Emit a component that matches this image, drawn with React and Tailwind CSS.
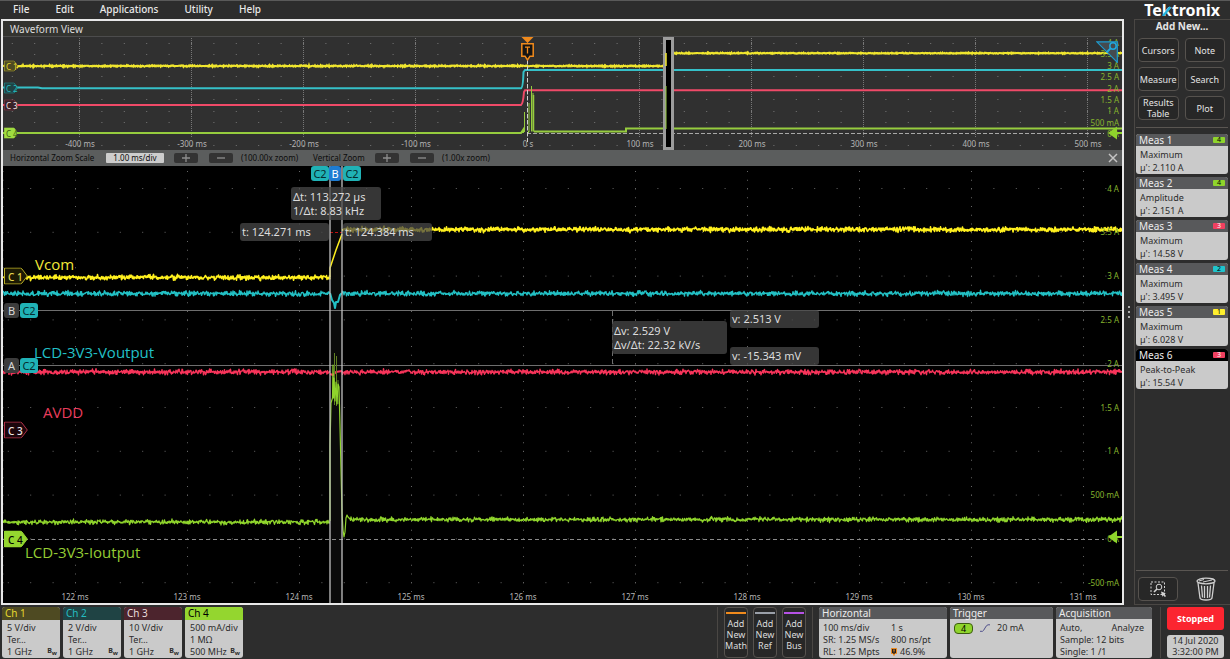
import { useState } from 'react'
import clsx from 'clsx'

const MENU = ['File', 'Edit', 'Applications', 'Utility', 'Help']
const ADD_NEW = ['Cursors', 'Note', 'Measure', 'Search', 'Results Table', 'Plot']

const MEASUREMENTS = [
  { name: 'Meas 1', type: 'Maximum',      value: '2.110 A', ch: 4 },
  { name: 'Meas 2', type: 'Amplitude',    value: '2.151 A', ch: 4 },
  { name: 'Meas 3', type: 'Maximum',      value: '14.58 V', ch: 3 },
  { name: 'Meas 4', type: 'Maximum',      value: '3.495 V', ch: 2 },
  { name: 'Meas 5', type: 'Maximum',      value: '6.028 V', ch: 1 },
  { name: 'Meas 6', type: 'Peak-to-Peak', value: '15.54 V', ch: 3, active: true },
]

const CH_BADGE = {
  1: 'bg-[#fff02e] text-black',
  2: 'bg-[#20c4cc] text-black',
  3: 'bg-[#f04060] text-white',
  4: 'bg-[#8fd42c] text-black',
}

const CHANNELS = [
  { name: 'Ch 1', head: 'bg-[#4e4a22] text-[#e6d92e]', rows: ['5 V/div', 'Ter…', '1 GHz'] },
  { name: 'Ch 2', head: 'bg-[#1f4344] text-[#25bcc0]', rows: ['2 V/div', 'Ter…', '1 GHz'] },
  { name: 'Ch 3', head: 'bg-[#4c242d] text-[#e8dcdc]', rows: ['10 V/div', 'Ter…', '1 GHz'] },
  { name: 'Ch 4', head: 'bg-[#94d62f] text-black',     rows: ['500 mA/div', '1 MΩ', '500 MHz'] },
]

const ADD_WAVES = [
  { name: 'Math', bar: 'bg-[#f08a1c]' },
  { name: 'Ref',  bar: 'bg-[#9a9fa8]' },
  { name: 'Bus',  bar: 'bg-[#b652e6]' },
]

// plot frames, in drawing units: x, y, width, height
const OVERVIEW = { x: 3, y: 37, w: 1119, h: 113 }
const MAIN     = { x: 3, y: 166, w: 1119, h: 437 }

const OVERVIEW_TIMES = ['-400 ms', '-300 ms', '-200 ms', '-100 ms', '0 s', '100 ms', '200 ms', '300 ms', '400 ms', '500 ms']
const MAIN_TIMES     = ['122 ms', '123 ms', '124 ms', '125 ms', '126 ms', '127 ms', '128 ms', '129 ms', '130 ms', '131 ms']
const OVERVIEW_AMPS  = ['4 A', '3.5 A', '3 A', '2.5 A', '2 A', '1.5 A', '1 A', '500 mA', '0 A']
const MAIN_AMPS      = ['4 A', '3.5 A', '3 A', '2.5 A', '2 A', '1.5 A', '1 A', '500 mA', '0 A', '-500 mA']

function makeRandom(seed) {
  let s = seed
  return () => {
    s = (s * 16807) % 2147483647
    return s / 2147483647
  }
}

// noisy horizontal run from x1 to x2 around y
function noise(x1, x2, y, amp, seed) {
  const rnd = makeRandom(seed)
  let d = ''
  for (let x = x1; x <= x2; x += 0.5) {
    const v = (rnd() + rnd() + rnd() - 1.5) * amp
    d += `${x === x1 ? 'M' : 'L'}${x} ${(y + v).toFixed(1)}`
  }
  return d
}

function at(frame, x, y) {
  return {
    left: `${((x - frame.x) / frame.w) * 100}%`,
    top: `${((y - frame.y) / frame.h) * 100}%`,
  }
}

function Grid({ startX, rows, top, bottom, stepY, color }) {
  const cols = Array.from({ length: 10 }, (_, i) => startX + i * 112)
  return (
    <g stroke={color} fill="none">
      {cols.map(x => (
        <path key={x} d={`M${x} ${top}V${bottom}`} strokeDasharray={`1 ${stepY - 1}`} />
      ))}
      {rows.map(y => (
        <path key={y} d={`M${startX - 67.7} ${y}H1122`} strokeDasharray="1 21.4" />
      ))}
    </g>
  )
}

function Plot({ frame, className, drawing, children }) {
  return (
    <div className={clsx('relative overflow-hidden', className)}>
      <svg
        className="absolute inset-0 h-full w-full"
        viewBox={`${frame.x} ${frame.y} ${frame.w} ${frame.h}`}
        preserveAspectRatio="none"
        aria-hidden="true"
      >
        {drawing}
      </svg>
      {children}
    </div>
  )
}

function TimeLabels({ frame, labels, startX, y }) {
  return labels.map((t, i) => (
    <span
      key={t}
      style={at(frame, startX + i * 112, y)}
      className="absolute -translate-x-1/2 -translate-y-1/2 whitespace-nowrap text-[8px] leading-3 text-[#b4b4b4]"
    >
      {t}
    </span>
  ))
}

function AmpLabels({ frame, labels, startY, step }) {
  return labels.map((t, i) => (
    <span
      key={t}
      style={{ top: at(frame, 0, startY + i * step).top }}
      className="absolute right-[3px] -translate-y-1/2 whitespace-nowrap text-[8px] leading-3 text-[#86b42e]"
    >
      {t}
    </span>
  ))
}

function LevelArrow({ frame, y }) {
  return (
    <svg style={{ top: at(frame, 0, y).top }} className="absolute right-0 h-3.5 w-3.5 -translate-y-1/2" viewBox="0 0 14 14" aria-hidden="true">
      <path d="M0 7L9 .5V6h5v2H9v5.500z" fill="#8fd42c" />
    </svg>
  )
}

function Flag({ frame, y, label, fill, stroke, text, small }) {
  return (
    <button
      style={at(frame, 4, y)}
      className={clsx(
        'absolute flex -translate-y-1/2 items-center whitespace-nowrap',
        small ? 'h-[11px] w-[14px] pl-0.5 text-[8px] leading-[11px]' : 'h-[17px] w-6 pl-1 text-[10px] leading-4 font-medium',
        text,
      )}
    >
      <svg className="absolute inset-0 h-full w-full" viewBox="0 0 24 17" preserveAspectRatio="none" aria-hidden="true">
        <path d="M.5 .5H16.500L18 1.500L23.300 8.500L18 15.500L16.500 16.500H.5z" fill={fill} stroke={stroke} />
      </svg>
      <span className="relative">{label}</span>
    </button>
  )
}

function Readout({ x, y, className, lines }) {
  return (
    <div
      style={at(MAIN, x, y)}
      className={clsx('absolute flex flex-col justify-center whitespace-nowrap rounded-[3px] bg-[#484848]/75 pl-0.5 text-[11px] leading-[14px] text-[#dcdcdc]', className)}
    >
      {lines.map(l => <p key={l}>{l}</p>)}
    </div>
  )
}

function CursorTag({ x, y, label, className }) {
  return (
    <button
      style={at(MAIN, x, y)}
      className={clsx('absolute h-[15px] rounded-[3px] text-center text-[11px] leading-[15px]', className)}
    >
      {label}
    </button>
  )
}

function WaveLabel({ x, y, className, children }) {
  return (
    <span style={at(MAIN, x, y)} className={clsx("absolute -translate-y-1/2 whitespace-nowrap font-['Open_Sans','Noto_Sans',sans-serif] text-[15px] leading-5", className)}>
      {children}
    </span>
  )
}

function OverviewDrawing() {
  return (
    <>
      <rect x="3" y="37" width="1119" height="113" fill="#303030" />
      <Grid startX={79.500} rows={[43.500, 54.500, 76.500, 99.500, 111.500, 122.500, 145.500]} top={38} bottom={138} stepY={2} color="#777" />
      <g fill="none" strokeWidth="2">
        <path d="M527 133.500H1104" stroke="#a8a8a8" strokeWidth="1" strokeDasharray="4 2" />
        <path d="M3 87.500H38L42 88.300H521Q523 88 523.500 72L525 70H1122" stroke="#35c0c8" />
        <path d="M3 105H521Q523 104 524 92L525 90.300H1122" stroke="#f04a68" />
        <path d="M3 133H521L523 130V132H524M528 132H529M534 131.500H626V128.500H1122" stroke="#96cc3e" />
        <path d="M524.500 112V132M529 103V132M533 93V131.500M531.500 86V131.500" stroke="#96cc3e" strokeWidth="1" />
        <path d="M533.500 95V131.500" stroke="#96cc3e" strokeWidth="1.500" />
        <path d={noise(3, 666, 66, 0.7, 11)} stroke="#f0e62e" />
        <path d={noise(666, 1122, 53.200, 0.5, 12)} stroke="#f0e62e" />
        <path d="M527.500 60V142" stroke="#d0d0d0" strokeDasharray="4 2" strokeWidth="1" />
      </g>
      <path d="M521.500 37H533.500L527.500 43z" fill="#f08a1c" />
      <path d="M521.800 43.800H533.200V56.200H530L527.500 60L525 56.200H521.800z" fill="#141414" stroke="#f08a1c" strokeWidth="1.500" />
      <path d="M525 47.200H530M527.500 47.200V53.500" stroke="#f08a1c" strokeWidth="1.300" />
      <rect x="664.5" y="38.5" width="8" height="110" fill="none" stroke="#9c9c9c" strokeWidth="3" />
      <rect x="666" y="40" width="5" height="107" fill="#000" />
      <path d="M666 86V129" stroke="#96cc3e" />
      <path d="M666 66V53" stroke="#f0e62e" strokeWidth="1.500" />
    </>
  )
}

function MainDrawing() {
  const rows = Array.from({ length: 10 }, (_, i) => 188.500 + i * 43.800)
  return (
    <>
      <rect x="3" y="166" width="1119" height="437" fill="#000" />
      <Grid startX={75.500} rows={rows} top={171} bottom={598} stepY={8.750} color="#666" />
      <path d="M3 171V598" stroke="#666" strokeDasharray="1 7.75" />
      <rect x="330" y="166" width="12" height="437" fill="#fff" fillOpacity="0.04" />
      <path d="M3 539.500H1104" stroke="#8a8a8a" strokeDasharray="4 3" />
      <path d="M3 310.500H1122M3 365.500H1122" stroke="#6e6e6e" />
      <path d="M612.500 311V365" stroke="#6e6e6e" strokeDasharray="5 3" />
      <g fill="none" strokeLinejoin="round">
        <path d={noise(3, 330, 277.500, 2.300, 21)} stroke="#fff01e" strokeWidth="1.600" />
        <path d="M330 277V268L334 256L336 250L342 234" stroke="#fff01e" strokeWidth="1.500" />
        <path d={noise(342, 1122, 229.500, 2.300, 22)} stroke="#fff01e" strokeWidth="1.600" />
        <path d={noise(3, 330, 293.500, 2.400, 23)} stroke="#22c0c4" strokeWidth="1.400" />
        <path d="M330 293L332 300L334 303L335 308L336 302L338 302L340 295L342 293" stroke="#22c0c4" strokeWidth="2" />
        <path d={noise(342, 1122, 293.500, 2.400, 24)} stroke="#22c0c4" strokeWidth="1.400" />
        <path d={noise(3, 330, 372, 2.400, 25)} stroke="#f8345a" strokeWidth="1.400" />
        <path d="M330 374L333 375L336 372L342 371" stroke="#f8345a" strokeWidth="2" />
        <path d={noise(342, 1122, 372, 2.400, 26)} stroke="#f8345a" strokeWidth="1.400" />
        <path d={noise(3, 330, 522, 2.200, 27)} stroke="#8fd42c" strokeWidth="1.300" />
        <path d="M334.500 353V405M336.500 356V406M338 380V404" stroke="#5f7f22" />
        <path d="M330 521V446L331 403L332.500 398L333 365L333.500 398L334 378L335 401L336 382L337 404L338 384L339 387L340 426L341 470L342 512L343 530L344 537L345 532L346 518L347 515L348 517L350 519" stroke="#8fd42c" strokeWidth="1.200" />
        <path d={noise(350, 1122, 519.500, 2.200, 28)} stroke="#8fd42c" strokeWidth="1.300" />
        <path d="M330 232.500H342" stroke="#c01010" strokeDasharray="3 2" />
      </g>
      <path d="M330 166V603M342 166V603" stroke="#c0c0c0" strokeWidth="1.300" />
    </>
  )
}

function ZoomButton({ plus, label }) {
  return (
    <button aria-label={label} className="flex h-2.5 w-6 items-center justify-center rounded-[2px] bg-[#333]">
      <svg className="h-2 w-2" viewBox="0 0 8 8" aria-hidden="true">
        <path d={plus ? 'M0 4H8M4 0V8' : 'M0 4H8'} stroke="#8e8e8e" strokeWidth="1.300" />
      </svg>
    </button>
  )
}

function ZoomBar() {
  const [scale, setScale] = useState('1.00 ms/div')
  return (
    <div className="flex h-4 shrink-0 items-center bg-[#5b5d5d] pl-[7px] pr-1 text-[8px] leading-3 text-[#0c0c0c]">
      <label htmlFor="zoom-scale" className="w-24 whitespace-nowrap">Horizontal Zoom Scale</label>
      <input
        id="zoom-scale"
        value={scale}
        onChange={e => setScale(e.target.value)}
        className="h-2.5 w-[58px] rounded-[1px] bg-[#cdcdcd] text-center text-[8px] leading-[10px]"
      />
      <div className="ml-2.5 flex items-center gap-[11px]">
        <ZoomButton plus label="Increase horizontal zoom" />
        <ZoomButton label="Decrease horizontal zoom" />
      </div>
      <span className="ml-2 w-[72px] whitespace-nowrap">(100.00x zoom)</span>
      <span className="w-[62px] whitespace-nowrap">Vertical Zoom</span>
      <div className="flex items-center gap-[11px]">
        <ZoomButton plus label="Increase vertical zoom" />
        <ZoomButton label="Decrease vertical zoom" />
      </div>
      <span className="ml-2 whitespace-nowrap">(1.00x zoom)</span>
      <button aria-label="Close zoom" className="ml-auto">
        <svg className="h-2.5 w-2.5" viewBox="0 0 10 10" aria-hidden="true">
          <path d="M1 1L9 9M9 1L1 9" stroke="#c4c4c4" strokeWidth="1.500" />
        </svg>
      </button>
    </div>
  )
}

function WaveformView() {
  return (
    <main className="ml-px flex min-w-0 flex-1 flex-col border-2 border-[#e8e8e8]">
      <h1 className="h-4 shrink-0 border-b border-[#4c4c4c] bg-[#33332f] pl-[7px] text-[10px] leading-4 text-[#dcdcdc]">Waveform View</h1>

      <Plot frame={OVERVIEW} className="h-[113px] shrink-0" drawing={<OverviewDrawing />}>
        <TimeLabels frame={OVERVIEW} labels={OVERVIEW_TIMES} startX={80} y={144} />
        <AmpLabels frame={OVERVIEW} labels={OVERVIEW_AMPS} startY={43} step={11.400} />
        <LevelArrow frame={OVERVIEW} y={132.500} />
        <Flag small frame={OVERVIEW} y={65.500} label="C 1" fill="#4e4a22" stroke="#c8bc30" text="text-[#e6d92e]" />
        <Flag small frame={OVERVIEW} y={88} label="C 2" fill="#1f4344" stroke="#22a8ac" text="text-[#25bcc0]" />
        <Flag small frame={OVERVIEW} y={105} label="C 3" fill="#3a2228" stroke="#a83c50" text="text-[#f0e4e4]" />
        <Flag small frame={OVERVIEW} y={133} label="C 4" fill="#a0dc40" stroke="#a0dc40" text="text-[#3c5c10]" />
        <button aria-label="Zoom overview" className="absolute right-1 top-1 h-[22px] w-[22px]">
          <svg className="h-full w-full" viewBox="0 0 22 22" fill="none" aria-hidden="true">
            <path d="M.8 .8H21.300V21.300z" fill="#454b4f" stroke="#1c9cd0" strokeWidth="1.200" />
            <circle cx="17" cy="5" r="3.200" stroke="#22a8dc" strokeWidth="1.500" />
            <path d="M14.600 7.400L10.500 11.500" stroke="#22a8dc" strokeWidth="2" />
          </svg>
        </button>
      </Plot>

      <ZoomBar />

      <Plot frame={MAIN} className="min-h-[437px] flex-1" drawing={<MainDrawing />}>
        <TimeLabels frame={MAIN} labels={MAIN_TIMES} startX={75} y={597} />
        <AmpLabels frame={MAIN} labels={MAIN_AMPS} startY={188.500} step={43.800} />
        <LevelArrow frame={MAIN} y={537} />

        <WaveLabel x={35} y={264} className="text-[#f4e838]">Vcom</WaveLabel>
        <WaveLabel x={34} y={352} className="text-[#22c0c8]">LCD-3V3-Voutput</WaveLabel>
        <WaveLabel x={43} y={412} className="text-[#e83c5c]">AVDD</WaveLabel>
        <WaveLabel x={25} y={552} className="text-[#94cc34]">LCD-3V3-Ioutput</WaveLabel>

        <Flag frame={MAIN} y={276} label="C 1" fill="#1c1a04" stroke="#b8ac24" text="text-[#e8dc50]" />
        <Flag frame={MAIN} y={430} label="C 3" fill="#1c060c" stroke="#b03048" text="text-[#f0e8e8]" />
        <Flag frame={MAIN} y={539} label="C 4" fill="#94d62f" stroke="#94d62f" text="text-black" />

        <CursorTag x={4} y={303} label="B" className="w-[15px] bg-[#3c3c3c] text-[#d8d8d8]" />
        <CursorTag x={20} y={303} label="C2" className="w-[18px] bg-[#20b2b6] text-[#062c2e]" />
        <CursorTag x={4} y={358} label="A" className="w-[15px] bg-[#3c3c3c] text-[#d8d8d8]" />
        <CursorTag x={20} y={358} label="C2" className="w-[18px] bg-[#20b2b6] text-[#062c2e]" />
        <CursorTag x={311} y={166} label="C2" className="w-[18px] bg-[#20b2b6] text-[#062c2e]" />
        <CursorTag x={343} y={166} label="C2" className="w-[18px] bg-[#20b2b6] text-[#062c2e]" />
        <CursorTag x={329} y={166} label="B" className="w-3 bg-[#1e7cd2] text-white" />

        <Readout x={291} y={187} className="h-[33px] w-[90px]" lines={['Δt: 113.272 µs', '1/Δt: 8.83 kHz']} />
        <Readout x={240} y={223} className="h-[18px] w-[89px]" lines={['t: 124.271 ms']} />
        <Readout x={343} y={223} className="h-[18px] w-[89px]" lines={['t: 124.384 ms']} />
        <Readout x={612} y={321} className="h-[33px] w-[115px]" lines={['Δv: 2.529 V', 'Δv/Δt: 22.32 kV/s']} />
        <Readout x={730} y={310} className="h-[18px] w-[89px]" lines={['v: 2.513 V']} />
        <Readout x={730} y={347} className="h-[18px] w-[89px]" lines={['v: -15.343 mV']} />
      </Plot>
    </main>
  )
}

function Sidebar() {
  return (
    <aside className="flex w-24 shrink-0 flex-col border-l border-t border-b border-[#4a4744] pl-px pr-0.5 pb-[3px]">
      <h2 className="h-[18px] text-center text-[10px] leading-[13px] font-bold text-[#e4e4e4]">Add New...</h2>
      <div className="grid grid-cols-2 gap-x-1.5 gap-y-[5px] pl-0.5 pr-[3px]">
        {ADD_NEW.map(name => (
          <button key={name} className="flex h-6 items-center justify-center rounded-[4px] border border-[#56524e] bg-[#272727] text-[9px] leading-[11px] text-[#e4e4e4]">
            {name}
          </button>
        ))}
      </div>
      <hr className="mt-[7px] mb-1.5 border-[#5a5652]" />
      <div className="flex flex-col gap-[3px]">
        {MEASUREMENTS.map(m => (
          <section key={m.name} className="h-10 overflow-hidden rounded-[3px] bg-[#cacaca] text-[9px] leading-[13px] text-[#2c2c2c]">
            <header className={clsx('flex h-3 items-center justify-between px-[3px] leading-3 text-[#ececec]', m.active ? 'bg-black' : 'bg-[#58595b]')}>
              <h3 className="text-[10px]">{m.name}</h3>
              <span className={clsx('h-1.5 w-3 rounded-[1px] text-center text-[7px] leading-[6px]', CH_BADGE[m.ch])}>{m.ch}</span>
            </header>
            <p className="px-1 pt-0.5">{m.type}</p>
            <p className="px-1">µ': {m.value}</p>
          </section>
        ))}
      </div>
      <hr className="mt-auto mb-1.5 border-[#5a5652]" />
      <div className="flex items-center justify-between pl-0.5 pr-3">
        <button aria-label="Zoom selection" className="flex h-6 w-10 items-center justify-center rounded-[4px] border border-[#56524e] bg-[#272727]">
          <svg className="h-4 w-4" viewBox="0 0 16 16" fill="none" stroke="#d4d4d4" aria-hidden="true">
            <rect x="1" y="1" width="13.500" height="12.500" strokeDasharray="2 1.500" />
            <circle cx="9" cy="6" r="2.800" />
            <path d="M7 8L4 11" strokeWidth="1.600" />
            <path d="M11 10.500L16 12.200L14.200 13L16 15L15 16L13 14.200L12.300 16z" fill="#d4d4d4" stroke="none" />
          </svg>
        </button>
        <button aria-label="Delete">
          <svg className="h-6 w-5" viewBox="0 0 20 24" fill="none" stroke="#d0d0d0" strokeWidth="1.300" aria-hidden="true">
            <ellipse cx="10" cy="4" rx="9" ry="2.800" />
            <path d="M3 4L8 2.500M7 5L16 3" strokeWidth="1" />
            <path d="M2 6L4 21Q4.500 23 10 23Q15.500 23 16 21L18 6" />
            <path d="M5.500 8.500L6.500 20.500M8.500 9V21M11.500 9V21M14.500 8.500L13.500 20.500" />
          </svg>
        </button>
      </div>
    </aside>
  )
}

function Card({ title, className, children }) {
  return (
    <section className={clsx('overflow-hidden rounded-[3px] bg-[#cacaca] text-[9px] leading-3 text-[#2c2c2c]', className)}>
      <h3 className="mb-[3px] h-3 bg-[#58595b] pl-[3px] text-[10px] leading-3 text-[#ececec]">{title}</h3>
      {children}
    </section>
  )
}

function Footer() {
  return (
    <footer className="flex h-[54px] shrink-0 gap-0.5 pt-0.5 pb-px pl-0.5">
      <div className="flex gap-[3px]">
        {CHANNELS.map(c => (
          <button key={c.name} className="relative w-[58px] overflow-hidden rounded-[3px] bg-[#cacaca] text-left text-[9px] leading-3 text-[#2c2c2c]">
            <span className={clsx('mb-0.5 block h-[13px] pl-[3px] text-[10px] leading-[13px]', c.head)}>{c.name}</span>
            {c.rows.map(r => <span key={r} className="block whitespace-nowrap pl-[5px]">{r}</span>)}
            <span className="absolute right-[3px] bottom-[3px] text-[7px] leading-[9px] font-bold">B<sub className="text-[6px]">w</sub></span>
          </button>
        ))}
      </div>

      <div className="ml-auto flex gap-[5px] border-l border-[#4a4744] pl-1.5 pr-1">
        {ADD_WAVES.map(w => (
          <button key={w.name} className="flex w-6 flex-col items-center rounded-[4px] border border-[#56524e] bg-[#272727] pt-1 text-[9px] leading-[11px] text-[#dcdcdc]">
            <span className={clsx('mb-1 h-0.5 w-5 shrink-0', w.bar)} />
            <span>Add</span>
            <span>New</span>
            <span>{w.name}</span>
          </button>
        ))}
      </div>

      <div className="flex gap-[3px] border-l border-[#4a4744] pl-1.5">
        <Card title="Horizontal" className="w-32">
          <dl className="grid grid-cols-[68px_1fr] whitespace-nowrap pl-1">
            <dd>100 ms/div</dd>
            <dd>1 s</dd>
            <dd>SR: 1.25 MS/s</dd>
            <dd>800 ns/pt</dd>
            <dd>RL: 1.25 Mpts</dd>
            <dd className="flex items-center gap-[3px]">
              <svg className="h-2 w-1.5" viewBox="0 0 6 8" aria-hidden="true">
                <path d="M.5 .5H5.500V5.500H4L3 7.500L2 5.500H.5z" fill="#222" stroke="#f08a1c" />
                <path d="M2 2H4M3 2V4.500" stroke="#f08a1c" strokeWidth=".8" />
              </svg>
              46.9%
            </dd>
          </dl>
        </Card>
        <Card title="Trigger" className="w-[103px]">
          <div className="flex items-center pl-1">
            <span className="h-[11px] w-[19px] rounded-[4px] border border-[#3c5c10] bg-[#8fd42c] text-center leading-[9px] text-black">4</span>
            <svg className="mx-[7px] h-2 w-2.5" viewBox="0 0 10 8" fill="none" aria-hidden="true">
              <path d="M0 7.300H2.500Q3.500 7 5 4T8 .8H10" stroke="#50508c" />
            </svg>
            <span>20 mA</span>
          </div>
        </Card>
        <Card title="Acquisition" className="w-24">
          <div className="pl-1">
            <p className="flex justify-between pr-2"><span>Auto,</span><span>Analyze</span></p>
            <p>Sample: 12 bits</p>
            <p>Single: 1 /1</p>
          </div>
        </Card>
      </div>

      <div className="ml-1.5 flex flex-col gap-[5px] border-l border-[#4a4744] pl-1.5 pr-1.5">
        <button className="h-[23px] w-[57px] rounded-[3px] bg-[#fb2530] text-[9px] font-bold text-white">Stopped</button>
        <div className="h-[23px] w-[57px] rounded-[3px] bg-[#cacaca] text-center text-[9px] leading-[11px] text-[#2c2c2c]">
          <p>14 Jul 2020</p>
          <p className="whitespace-nowrap">3:32:00 PM</p>
        </div>
      </div>
    </footer>
  )
}

export default function App() {
  return (
    <div className="flex min-h-screen flex-col bg-[#2d2d2d] font-['Noto_Sans','Open_Sans',sans-serif] antialiased">
      <header className="flex h-[19px] shrink-0 items-start justify-between border-t border-[#5a5a5a] pl-[13px] pr-2.5">
        <nav className="flex gap-[26px] text-[10px] leading-4 font-medium text-[#e8e8e8]">
          {MENU.map(m => <button key={m}>{m}</button>)}
        </nav>
        <div className="relative text-base leading-[18px] font-bold text-white">
          Tektronix
          <svg className="absolute left-[18px] top-[3px] h-3 w-2.5" viewBox="0 0 10 12" aria-hidden="true">
            <path d="M1 12L8.500 3" stroke="#22b4dc" strokeWidth="2.400" />
          </svg>
        </div>
      </header>

      <div className="flex flex-1">
        <WaveformView />
        <div className="flex w-2.5 shrink-0 flex-col items-center justify-center gap-[3px]">
          <span className="h-0.5 w-0.5 rounded-full bg-[#d8d8d8]" />
          <span className="h-0.5 w-0.5 rounded-full bg-[#d8d8d8]" />
          <span className="h-0.5 w-0.5 rounded-full bg-[#d8d8d8]" />
        </div>
        <Sidebar />
      </div>

      <Footer />
    </div>
  )
}
